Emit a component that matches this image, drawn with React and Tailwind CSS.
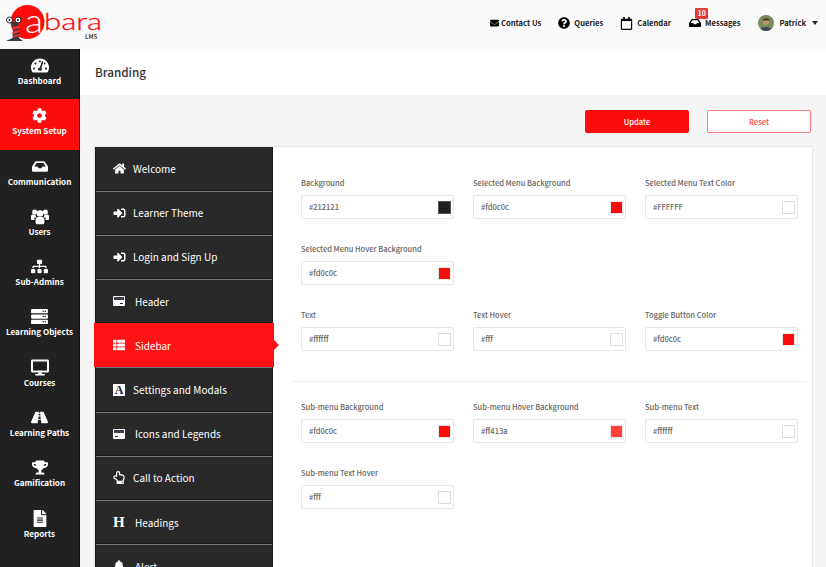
import {
  FaBell,
  FaCog,
  FaDesktop,
  FaEnvelope,
  FaFileAlt,
  FaHome,
  FaInbox,
  FaQuestionCircle,
  FaRegCalendar,
  FaRegHandPointUp,
  FaRoad,
  FaServer,
  FaSignInAlt,
  FaSitemap,
  FaTachometerAlt,
  FaThList,
  FaTrophy,
} from "react-icons/fa";

function UsersIcon({ className }) {
  return (
    <svg viewBox="0 0 18 16" fill="currentColor" className={className}>
      <circle cx="3.6" cy="3.4" r="2.5" />
      <circle cx="14.4" cy="3.4" r="2.5" />
      <path d="M0 7.5c0-1 1-1.6 2-1.6h2.6C4.4 7 5 8.4 5.6 9H3.4v2.5H1.2C.5 11.5 0 11 0 10.4Z" />
      <path d="M18 7.5c0-1-1-1.6-2-1.6h-2.6c.2 1.1-.4 2.5-1 3.1h2.2v2.5h2.2c.7 0 1.2-.5 1.2-1.1Z" />
      <circle cx="9" cy="5" r="3.3" />
      <path d="M4.6 11c0-1.5 1-2.4 2.4-2.4h4c1.4 0 2.4.9 2.4 2.4v3.2c0 .9-.7 1.5-1.5 1.5H6.1c-.8 0-1.5-.6-1.5-1.5Z" />
    </svg>
  );
}

function CardIcon({ dashLeft }) {
  return (
    <svg width="12" height="10" viewBox="0 0 12 10" className="ml-[17px] shrink-0">
      <rect width="12" height="10" rx="1" fill="#fff" />
      <rect x="1" y="1" width="10" height="3" fill="#3c3f4a" />
      <rect x={dashLeft ? 2 : 7} y="7" width="3" height="1" fill="#292929" />
    </svg>
  );
}

function FontIcon() {
  return (
    <span className="ml-[17px] w-[12px] h-[12px] shrink-0 bg-white text-[#1c2340] flex items-center justify-center font-['Liberation_Serif',serif] font-bold text-[12px] leading-none">
      A
    </span>
  );
}

function HeadingIcon() {
  return (
    <span className="ml-[17px] w-[12px] shrink-0 text-white font-['Liberation_Serif',serif] font-bold text-[15px] leading-none">
      H
    </span>
  );
}

const sideItems = [
  { label: "Dashboard", icon: FaTachometerAlt, size: "w-[18px] h-[17px]" },
  { label: "System Setup", icon: FaCog, size: "w-[15px] h-[17px]", active: true },
  { label: "Communication", icon: FaInbox, size: "w-[16px] h-[17px]" },
  { label: "Users", icon: UsersIcon, size: "w-[18px] h-[17px]" },
  { label: "Sub-Admins", icon: FaSitemap, size: "w-[17px] h-[17px]" },
  { label: "Learning Objects", icon: FaServer, size: "w-[17px] h-[17px]" },
  { label: "Courses", icon: FaDesktop, size: "w-[18px] h-[17px]" },
  { label: "Learning Paths", icon: FaRoad, size: "w-[17px] h-[17px]" },
  { label: "Gamification", icon: FaTrophy, size: "w-[16px] h-[17px]" },
  { label: "Reports", icon: FaFileAlt, size: "w-[14px] h-[17px]" },
];

const menuItems = [
  { label: "Welcome", icon: <FaHome className="ml-[17px] w-[13px] text-[13px] shrink-0" />, gap: "ml-[7px]" },
  { label: "Learner Theme", icon: <FaSignInAlt className="ml-[17px] w-[13px] text-[12px] shrink-0" />, gap: "ml-[7px]" },
  { label: "Login and Sign Up", icon: <FaSignInAlt className="ml-[17px] w-[13px] text-[12px] shrink-0" />, gap: "ml-[7px]" },
  { label: "Header", icon: <CardIcon />, gap: "ml-[10px]" },
  { label: "Sidebar", icon: <FaThList className="ml-[18px] w-[12px] text-[12px] shrink-0" />, gap: "ml-[10px]", active: true },
  { label: "Settings and Modals", icon: <FontIcon />, gap: "ml-[8px]" },
  { label: "Icons and Legends", icon: <CardIcon dashLeft />, gap: "ml-[10px]" },
  { label: "Call to Action", icon: <FaRegHandPointUp className="ml-[17px] w-[12px] text-[13px] shrink-0" />, gap: "ml-[8px]" },
  { label: "Headings", icon: <HeadingIcon />, gap: "ml-[10px]" },
  { label: "Alert", icon: <FaBell className="ml-[17px] w-[12px] text-[12px] shrink-0" />, gap: "ml-[10px]" },
];

const groupOne = [
  { label: "Background", value: "#212121", swatch: "bg-[#212121] border-[#555]" },
  { label: "Selected Menu Background", value: "#fd0c0c", swatch: "bg-[#fd0c0c] border-[#e8e8e8]" },
  { label: "Selected Menu Text Color", value: "#FFFFFF", swatch: "bg-white border-[#ddd]" },
  { label: "Selected Menu Hover Background", value: "#fd0c0c", swatch: "bg-[#fd0c0c] border-[#e8e8e8]" },
  { label: "Text", value: "#ffffff", swatch: "bg-white border-[#ddd]", newRow: true },
  { label: "Text Hover", value: "#fff", swatch: "bg-white border-[#ddd]" },
  { label: "Toggle Button Color", value: "#fd0c0c", swatch: "bg-[#fd0c0c] border-[#e8e8e8]" },
];

const groupTwo = [
  { label: "Sub-menu Background", value: "#fd0c0c", swatch: "bg-[#fd0c0c] border-[#e8e8e8]" },
  { label: "Sub-menu Hover Background", value: "#ff413a", swatch: "bg-[#ff413a] border-[#e8e8e8]" },
  { label: "Sub-menu Text", value: "#ffffff", swatch: "bg-white border-[#ddd]" },
  { label: "Sub-menu Text Hover", value: "#fff", swatch: "bg-white border-[#ddd]" },
];

function Logo() {
  return (
    <svg width="106" height="49" viewBox="0 0 106 49" className="shrink-0">
      <circle cx="27.5" cy="22" r="17" fill="#fd0c0c" />
      <text x="25" y="33" fontFamily="Lato, sans-serif" fontSize="34" fontWeight="300" textLength="18" lengthAdjust="spacingAndGlyphs" fill="#fff">
        a
      </text>
      <text x="44" y="30" fontFamily="Lato, sans-serif" fontSize="23" fontWeight="300" textLength="58" lengthAdjust="spacingAndGlyphs" fill="#fd0c0c" stroke="#fd0c0c" strokeWidth="0.3">
        bara
      </text>
      <text x="85" y="38.5" fontFamily="'Noto Sans CJK SC', sans-serif" fontSize="6" fontWeight="700" fill="#444">
        LMS
      </text>
      {/* snail */}
      <path d="M11.5 22 L13 30 L12.5 38 L6 41 L23 41 L19 38 L20 30 L17.5 22 Z" fill="#3a3a3a" />
      <path d="M12 27 L20 25.5 L20 28 L12.5 30 Z M12.5 31.5 L20 29.5 L19.5 32 L12.5 34.5 Z M13 36 L19.5 33.5 L19 36 L13 38 Z" fill="#ef2b2b" />
      <circle cx="9.5" cy="20" r="3" fill="#fff" stroke="#222" strokeWidth="1" />
      <circle cx="18" cy="20" r="3" fill="#fff" stroke="#222" strokeWidth="1" />
      <circle cx="9.5" cy="20" r="1" fill="#222" />
      <circle cx="18" cy="20" r="1" fill="#222" />
    </svg>
  );
}

function Avatar() {
  return (
    <svg width="16" height="16" viewBox="0 0 16 16" className="rounded-full shrink-0">
      <rect width="16" height="16" fill="#7d8a5c" />
      <circle cx="8" cy="6.5" r="3.2" fill="#c09274" />
      <path d="M2 16 C2 10.5 14 10.5 14 16 Z" fill="#3f4a5e" />
      <path d="M4.5 5.5 C5 2.5 11 2.5 11.5 5.5 Z" fill="#4a3524" />
    </svg>
  );
}

function TopLink({ icon: Icon, label, iconClass, textClass }) {
  return (
    <a className="flex items-center text-[7.6px] leading-[14px] font-semibold text-[#222]">
      <Icon className={iconClass} />
      <span className={textClass}>{label}</span>
    </a>
  );
}

function ColorField({ label, value, swatch, newRow }) {
  return (
    <div className={newRow ? "col-start-1" : ""}>
      <label className="block text-[7.5px] font-medium leading-[14px] text-[#666] mb-[5px] whitespace-nowrap">{label}</label>
      <div className="flex items-center justify-between h-[24px] border border-[#e6e6ee] rounded-[2px] bg-white pl-[7px] pr-[2px]">
        <span className="text-[7.5px] font-medium leading-[14px] text-[#666]">{value}</span>
        <span className={`w-[13px] h-[13px] border ${swatch}`} />
      </div>
    </div>
  );
}

export default function App() {
  return (
    <div className="h-screen overflow-hidden bg-[#f5f5f5] flex flex-col font-['Noto_Sans_CJK_SC',sans-serif]">
      <header className="h-[49px] shrink-0 bg-[#fafafa] flex items-center justify-between pr-[8px]">
        <Logo />
        <nav className="flex items-center pb-[3px]">
          <TopLink icon={FaEnvelope} label="Contact Us" iconClass="w-[9px] text-[10px] text-black" textClass="ml-[2px]" />
          <div className="ml-[17px]">
            <TopLink icon={FaQuestionCircle} label="Queries" iconClass="text-[12px] text-black" textClass="ml-[4px]" />
          </div>
          <div className="ml-[17px]">
            <TopLink icon={FaRegCalendar} label="Calendar" iconClass="text-[13px] text-black" textClass="ml-[4px]" />
          </div>
          <div className="relative ml-[18px]">
            <span className="absolute left-[6px] top-[-8px] bg-[#e23c31] text-white text-[7px] font-bold leading-[9px] px-[2.5px] py-[1px] rounded-[1px]">
              10
            </span>
            <TopLink icon={FaInbox} label="Messages" iconClass="text-[12px] text-black" textClass="ml-[4px]" />
          </div>
          <div className="flex items-center ml-[18px] text-[7.6px] leading-[14px] font-semibold text-[#222]">
            <Avatar />
            <span className="ml-[5px]">Patrick</span>
            <span className="ml-[6px] w-0 h-0 border-x-[3px] border-x-transparent border-t-[4px] border-t-[#222]" />
          </div>
        </nav>
      </header>

      <div className="flex flex-1 min-h-0">
        <aside className="w-[80px] shrink-0 bg-[#212121] border-r border-[#111]">
          {sideItems.map((item) => (
            <div
              key={item.label}
              className={`h-[50.3px] flex flex-col items-center pt-[8px] text-white ${item.active ? "bg-[#fd0c0c]" : ""}`}
            >
              <item.icon className={item.size} />
              <span className="text-[8.1px] font-semibold leading-[14px] whitespace-nowrap">{item.label}</span>
            </div>
          ))}
        </aside>

        <main className="flex-1 min-w-0">
          <div className="h-[46px] bg-white flex items-center pl-[15px] text-[11.7px] leading-[20px] font-medium text-[#333]">Branding</div>

          <div className="pl-[14px] pr-[13px]">
            <div className="flex justify-end gap-[18px] pt-[15px] pb-[13px] pr-[2px]">
              <button className="w-[104px] h-[23px] rounded-[2px] bg-[#fd0c0c] text-white text-[7.6px] font-medium">Update</button>
              <button className="w-[104px] h-[23px] rounded-[2px] bg-white border border-[#fd8080] text-[#fd4a4a] text-[7.6px] font-medium">Reset</button>
            </div>

            <div className="flex bg-white border border-[#e8e8e8] h-[500px]">
              <div className="w-[178px] shrink-0 bg-[#292929] border-x border-[#1a1a1a]">
                {menuItems.map((item) => (
                  <div
                    key={item.label}
                    className={
                      item.active
                        ? "relative -mx-[2px] h-[44.2px] w-[180px] flex items-center pl-[1px] bg-[#fd1313] text-white"
                        : "h-[44.2px] first:h-[43.7px] flex items-center border-t border-t-[#777] border-b border-b-[#1a1a1a] text-white first:border-t-0"
                    }
                  >
                    {item.icon}
                    <span className={`${item.gap} pt-[1px] text-[10px] leading-[16px] whitespace-nowrap`}>{item.label}</span>
                    {item.active ? (
                      <span className="absolute right-[-5px] top-[17px] w-0 h-0 border-y-[5px] border-y-transparent border-l-[5px] border-l-[#fd1313]" />
                    ) : null}
                  </div>
                ))}
              </div>

              <div className="flex-1 min-w-0 pl-[19px] pr-[6px] pt-[29px]">
                <div className="grid grid-cols-[153px_153px_153px] gap-x-[19px] gap-y-[23px] px-[9px]">
                  {groupOne.map((f) => (
                    <ColorField key={f.label} {...f} />
                  ))}
                </div>
                <div className="border-t border-[#eee] mt-[30px] mb-[18px]" />
                <div className="grid grid-cols-[153px_153px_153px] gap-x-[19px] gap-y-[23px] px-[9px]">
                  {groupTwo.map((f) => (
                    <ColorField key={f.label} {...f} />
                  ))}
                </div>
              </div>
            </div>
          </div>
        </main>
      </div>
    </div>
  );
}
